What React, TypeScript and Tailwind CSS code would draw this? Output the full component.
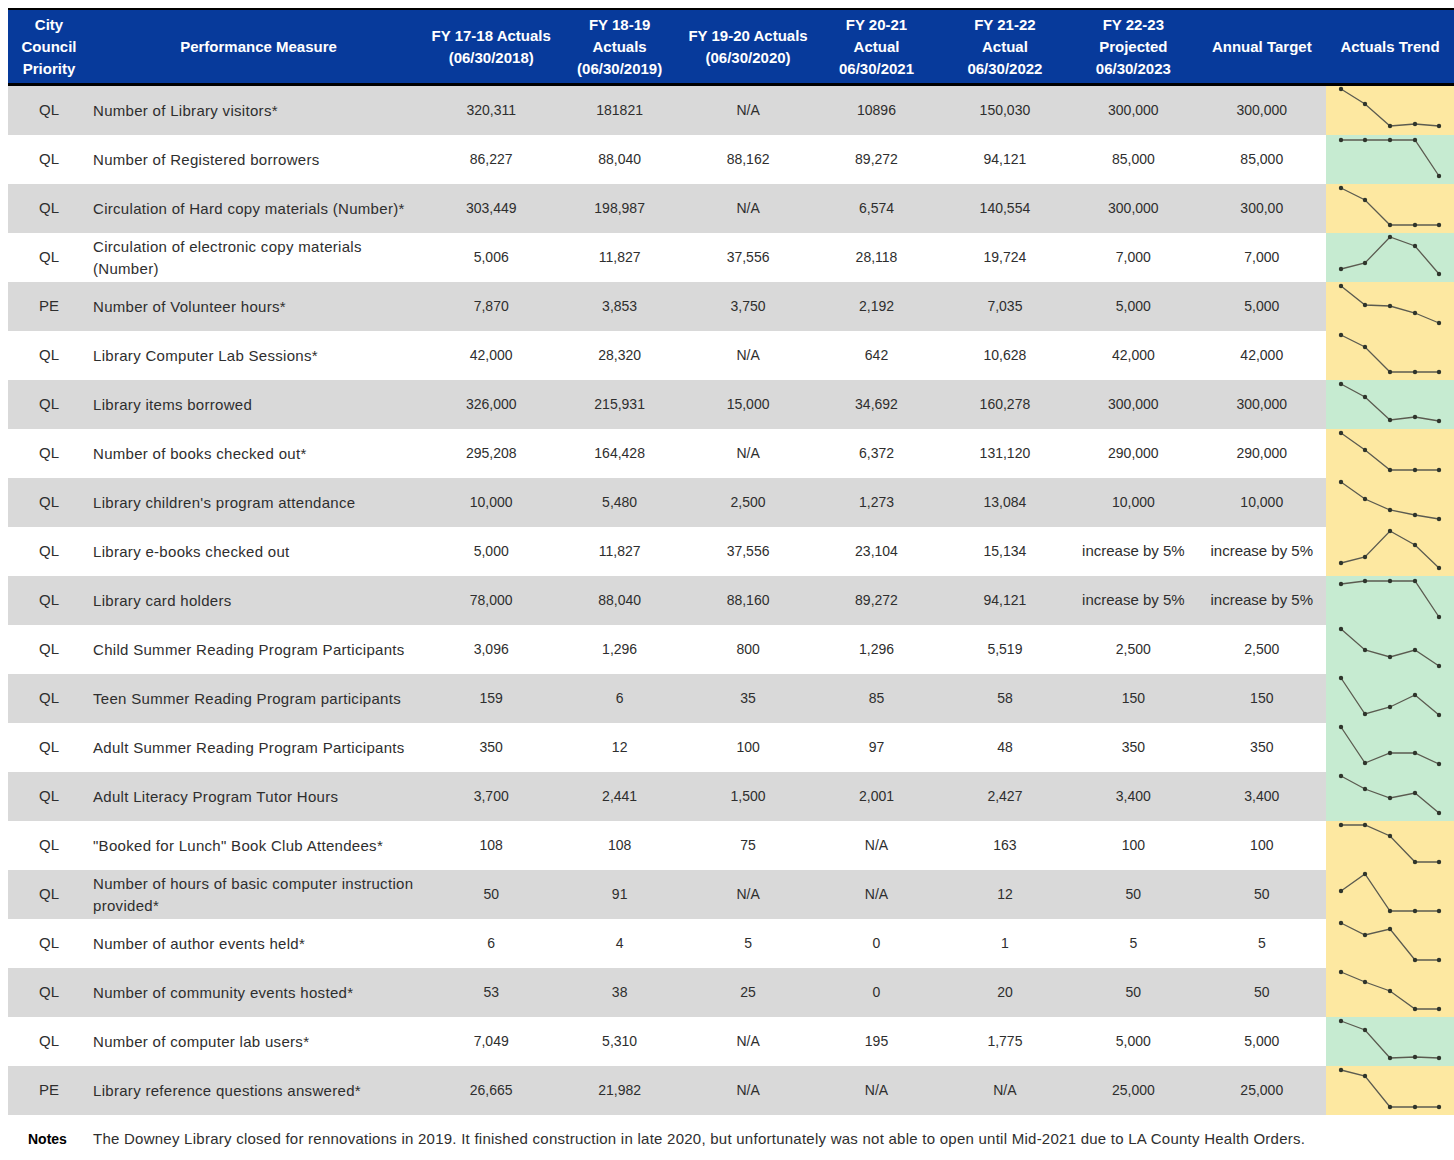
import React from "react";

type Row = [string, string, string, string, string, string, string, string, string, "y" | "g", number[]];

const rows: Row[] = [
  ["QL", "Number of Library visitors*", "320,311", "181821", "N/A", "10896", "150,030", "300,000", "300,000", "y", [3, 18, 40, 38, 40]],
  ["QL", "Number of Registered borrowers", "86,227", "88,040", "88,162", "89,272", "94,121", "85,000", "85,000", "g", [5, 5, 5, 5, 41]],
  ["QL", "Circulation of Hard copy materials (Number)*", "303,449", "198,987", "N/A", "6,574", "140,554", "300,000", "300,00", "y", [4, 16, 41, 41, 41]],
  ["QL", "Circulation of electronic copy materials\n(Number)", "5,006", "11,827", "37,556", "28,118", "19,724", "7,000", "7,000", "g", [36, 30, 4, 13, 41]],
  ["PE", "Number of Volunteer hours*", "7,870", "3,853", "3,750", "2,192", "7,035", "5,000", "5,000", "y", [4, 23, 24, 31, 41]],
  ["QL", "Library Computer Lab Sessions*", "42,000", "28,320", "N/A", "642", "10,628", "42,000", "42,000", "y", [4, 16, 41, 41, 41]],
  ["QL", "Library items borrowed", "326,000", "215,931", "15,000", "34,692", "160,278", "300,000", "300,000", "g", [4, 17, 40, 37, 41]],
  ["QL", "Number of books checked out*", "295,208", "164,428", "N/A", "6,372", "131,120", "290,000", "290,000", "y", [4, 21, 41, 41, 41]],
  ["QL", "Library children's program attendance", "10,000", "5,480", "2,500", "1,273", "13,084", "10,000", "10,000", "y", [4, 21, 32, 37, 41]],
  ["QL", "Library e-books checked out", "5,000", "11,827", "37,556", "23,104", "15,134", "increase by 5%", "increase by 5%", "y", [36, 30, 4, 18, 41]],
  ["QL", "Library card holders", "78,000", "88,040", "88,160", "89,272", "94,121", "increase by 5%", "increase by 5%", "g", [8, 5, 5, 5, 41]],
  ["QL", "Child Summer Reading Program Participants", "3,096", "1,296", "800", "1,296", "5,519", "2,500", "2,500", "g", [4, 25, 32, 25, 41]],
  ["QL", "Teen Summer Reading Program participants", "159", "6", "35", "85", "58", "150", "150", "g", [4, 40, 33, 21, 41]],
  ["QL", "Adult Summer Reading Program Participants", "350", "12", "100", "97", "48", "350", "350", "g", [4, 40, 30, 30, 41]],
  ["QL", "Adult Literacy Program Tutor Hours", "3,700", "2,441", "1,500", "2,001", "2,427", "3,400", "3,400", "g", [4, 17, 26, 21, 41]],
  ["QL", "\"Booked for Lunch\" Book Club Attendees*", "108", "108", "75", "N/A", "163", "100", "100", "y", [4, 4, 15, 41, 41]],
  ["QL", "Number of hours of basic computer instruction\nprovided*", "50", "91", "N/A", "N/A", "12", "50", "50", "y", [21, 4, 41, 41, 41]],
  ["QL", "Number of author events held*", "6", "4", "5", "0", "1", "5", "5", "y", [4, 16, 10, 41, 41]],
  ["QL", "Number of community events hosted*", "53", "38", "25", "0", "20", "50", "50", "y", [4, 14, 23, 41, 41]],
  ["QL", "Number of computer lab users*", "7,049", "5,310", "N/A", "195", "1,775", "5,000", "5,000", "g", [4, 13, 41, 40, 41]],
  ["PE", "Library reference questions answered*", "26,665", "21,982", "N/A", "N/A", "N/A", "25,000", "25,000", "y", [4, 10, 41, 41, 41]],
];

const headers: string[][] = [
  ["City", "Council", "Priority"],
  ["Performance Measure"],
  ["FY 17-18 Actuals", "(06/30/2018)"],
  ["FY 18-19", "Actuals", "(06/30/2019)"],
  ["FY 19-20 Actuals", "(06/30/2020)"],
  ["FY 20-21", "Actual", "06/30/2021"],
  ["FY 21-22", "Actual", "06/30/2022"],
  ["FY 22-23", "Projected", "06/30/2023"],
  ["Annual Target"],
  ["Actuals Trend"],
];

const xs = [15, 39, 64, 89, 113];

function Spark({ ys }: { ys: number[] }) {
  const pts = ys.map((y, i) => `${xs[i]},${y}`).join(" ");
  return (
    <svg width="128" height="49" viewBox="0 0 128 49" className="block">
      <polyline points={pts} fill="none" stroke="#5b5b50" strokeWidth="1.3" />
      {ys.map((y, i) => (
        <circle key={i} cx={xs[i]} cy={y} r="2.2" fill="#2f352c" />
      ))}
    </svg>
  );
}

const grid = "grid grid-cols-[82px_337px_repeat(7,minmax(0,1fr))_128px]";

export default function App() {
  return (
    <div className="w-[1454px] bg-white pt-[8px] pl-[8px]" style={{ fontFamily: '"Liberation Sans", Arial, sans-serif' }}>
      <div className="w-[1446px]">
        <div className={`${grid} h-[78px] border-t-2 border-b-[3px] border-black bg-[#073a9b] text-white font-bold text-[15px] leading-[22px]`}>
          {headers.map((h, i) => (
            <div key={i} className="flex flex-col items-center justify-center text-center whitespace-nowrap">
              {h.map((l, j) => (
                <div key={j}>{l}</div>
              ))}
            </div>
          ))}
        </div>
        {rows.map((r, i) => {
          const bg = i % 2 === 0 ? "bg-[#d9d9d9]" : "bg-white";
          const trendBg = r[9] === "y" ? "bg-[#fde8a1]" : "bg-[#c6ebd1]";
          return (
            <div key={i} className={`${grid} h-[49px] text-[#2e2e2e]`}>
              <div className={`${bg} flex items-center justify-center text-[15px]`}>{r[0]}</div>
              <div className={`${bg} flex flex-col justify-center pl-[3px] text-[15px] tracking-[0.3px] leading-[22px] whitespace-nowrap`}>
                {r[1].split("\n").map((l, j) => (
                  <div key={j}>{l}</div>
                ))}
              </div>
              {r.slice(2, 9).map((v, j) => (
                <div
                  key={j}
                  className={`${bg} flex items-center justify-center whitespace-nowrap ${
                    (v as string).startsWith("increase") ? "text-[15px]" : "text-[14px]"
                  }`}
                >
                  {v as string}
                </div>
              ))}
              <div className={`${trendBg}`}>
                <Spark ys={r[10]} />
              </div>
            </div>
          );
        })}
        <div className="flex h-[48px] items-center text-[#2e2e2e]">
          <div className="w-[82px] pl-[20px] font-bold text-[14px] text-black">Notes</div>
          <div className="pl-[3px] text-[15px] tracking-[0.25px] whitespace-nowrap">
            The Downey Library closed for rennovations in 2019. It finished construction in late 2020, but unfortunately was not able to open until Mid-2021 due to LA County Health Orders.
          </div>
        </div>
      </div>
    </div>
  );
}
